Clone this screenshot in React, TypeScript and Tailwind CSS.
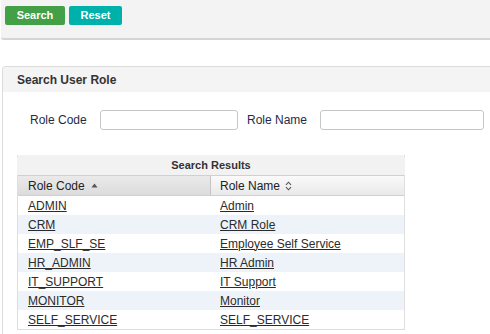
import React from 'react';

const rows = [
  ['ADMIN', 'Admin'],
  ['CRM', 'CRM Role'],
  ['EMP_SLF_SE', 'Employee Self Service'],
  ['HR_ADMIN', 'HR Admin'],
  ['IT_SUPPORT', 'IT Support'],
  ['MONITOR', 'Monitor'],
  ['SELF_SERVICE', 'SELF_SERVICE'],
];

const App = () => {
  return (
    <div className="w-[490px] h-[334px] overflow-hidden bg-white font-['Liberation_Sans',Arial,sans-serif] text-[12px] text-[#333]">
      {/* Toolbar */}
      <div className="ml-px h-[40px] bg-[#f3f3f3] border-b-2 border-[#d4d4d4] rounded-bl-[3px] flex gap-[4px] px-[4px] pt-[6px]">
        <button className="h-[19px] w-[60px] rounded-[2px] bg-[#43a047] text-white font-bold text-[11px] leading-[19px]">
          Search
        </button>
        <button className="h-[19px] w-[53px] rounded-[2px] bg-[#00b0aa] text-white font-bold text-[11px] leading-[19px]">
          Reset
        </button>
      </div>

      {/* Search panel */}
      <div className="mt-[26px] ml-[2px] border-l border-t border-[#dcdcdc] rounded-tl-[4px] h-[300px]">
        <div className="h-[25px] bg-[#f4f4f4] pl-[14px] flex items-center font-bold text-[12px] text-[#333] rounded-tl-[3px]">
          Search User Role
        </div>

        <div className="mt-[18px] flex items-center h-[20px] pl-[27px] text-[#1e2b48]">
          <span className="w-[70px]">Role Code</span>
          <input className="w-[138px] h-[20px] border border-[#c6c6c6] rounded-[3px] bg-white" />
          <span className="ml-[9px] w-[73px]">Role Name</span>
          <input className="w-[164px] h-[20px] border border-[#c6c6c6] rounded-[3px] bg-white" />
        </div>

        <div className="mt-[25px] ml-[14px] w-[388px] border-x border-b border-[#dedede]">
          <div className="-mx-px h-[20px] bg-[#f2f2f2] rounded-t-[4px] flex items-center justify-center font-bold text-[11px] text-[#333]">
            Search Results
          </div>
          <div className="flex h-[21px] border-t border-b border-[#d0d0d0] text-[#222]">
            <div className="w-[193px] pl-[10px] flex items-center gap-[6px] bg-gradient-to-b from-[#eaeaea] to-[#dcdcdc] border-r border-[#c4c4c4]">
              Role Code
              <svg width="7" height="5" viewBox="0 0 7 5"><path d="M3.5 0.5 L6.5 4.5 L0.5 4.5 Z" fill="#555" /></svg>
            </div>
            <div className="flex-1 pl-[9px] flex items-center gap-[5px] bg-gradient-to-b from-[#fafafa] to-[#e9e9e9]">
              Role Name
              <svg width="7" height="10" viewBox="0 0 7 10" fill="none" stroke="#555" strokeWidth="1.1">
                <path d="M1 3.8 L3.5 1.2 L6 3.8" />
                <path d="M1 6.2 L3.5 8.8 L6 6.2" />
              </svg>
            </div>
          </div>
          {rows.map(([code, name], i) => (
            <div key={code} className={`flex h-[19px] items-center ${i % 2 === 1 ? 'bg-[#eef3fa]' : 'bg-white'}`}>
              <a className="w-[193px] pl-[10px] underline text-[#2b2b2b]">{code}</a>
              <a className="flex-1 pl-[9px] underline text-[#2b2b2b]">{name}</a>
            </div>
          ))}
        </div>
      </div>
    </div>
  );
};

export default App;
